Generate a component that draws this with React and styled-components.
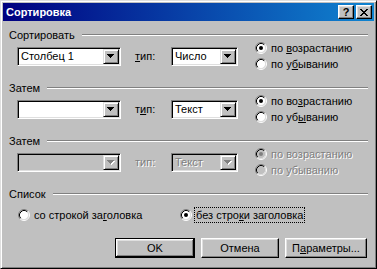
import React from "react";
import styled, { createGlobalStyle } from "styled-components";

const GlobalStyle = createGlobalStyle`
  body {
    margin: 0;
    background: #c0c0c0;
    font-family: "Liberation Sans", Arial, sans-serif;
  }
`;

const Window = styled.div`
  box-sizing: border-box;
  width: 377px;
  height: 269px;
  background: #c0c0c0;
  border: 1px solid;
  border-color: #dfdfdf #000 #000 #dfdfdf;
  box-shadow: inset 1px 1px #fff, inset -1px -1px #808080;
  padding: 2px;
  font-size: 11px;
  color: #000;
  display: flex;
  flex-direction: column;
`;

const TitleBar = styled.div`
  height: 18px;
  display: flex;
  align-items: center;
  justify-content: space-between;
  padding: 0 2px 0 3px;
  background: linear-gradient(to right, #000080, #1084d0);
`;

const Title = styled.span`
  color: #fff;
  font-weight: bold;
  font-size: 11px;
`;

const TitleButtons = styled.div`
  display: flex;
  gap: 2px;
`;

const TitleButton = styled.div`
  box-sizing: border-box;
  width: 16px;
  height: 14px;
  background: #c0c0c0;
  border: 1px solid;
  border-color: #fff #000 #000 #fff;
  box-shadow: inset -1px -1px #808080, inset 1px 1px #dfdfdf;
  display: flex;
  align-items: center;
  justify-content: center;
  font-weight: bold;
  font-size: 11px;
  line-height: 12px;
`;

const Body = styled.div`
  padding-top: 9px;
  display: flex;
  flex-direction: column;
`;

const Section = styled.div`
  margin-bottom: 11px;
`;

const Header = styled.div`
  height: 10px;
  display: flex;
  align-items: center;
  gap: 7px;
  padding: 0 6px;
  line-height: 10px;
`;

const Line = styled.div`
  flex: 1;
  height: 0;
  border-top: 1px solid #808080;
  border-bottom: 1px solid #fff;
`;

const Row = styled.div`
  height: 32px;
  display: flex;
  align-items: center;
  padding-left: 14px;
`;

const ComboBox = styled.div`
  box-sizing: border-box;
  width: ${({ $w }) => $w}px;
  height: 19px;
  padding: 1px;
  display: flex;
  border: 1px solid;
  border-color: #808080 #fff #fff #808080;
  box-shadow: inset 1px 1px #000, inset -1px -1px #dfdfdf;
  background: ${({ $disabled }) => ($disabled ? "#c0c0c0" : "#fff")};
`;

const ComboText = styled.span`
  flex: 1;
  padding-left: 2px;
  line-height: 15px;
  white-space: nowrap;
  color: ${({ $disabled }) => ($disabled ? "#808080" : "#000")};
  text-shadow: ${({ $disabled }) => ($disabled ? "1px 1px 0 #fff" : "none")};
`;

const DropButton = styled.div`
  box-sizing: border-box;
  width: 16px;
  height: 15px;
  background: #c0c0c0;
  border: 1px solid;
  border-color: #dfdfdf #000 #000 #dfdfdf;
  box-shadow: inset 1px 1px #fff, inset -1px -1px #808080;
  display: flex;
  align-items: center;
  justify-content: center;
`;

const TypeLabel = styled.span`
  width: 36px;
  margin-left: 14px;
  color: ${({ $disabled }) => ($disabled ? "#808080" : "#000")};
  text-shadow: ${({ $disabled }) => ($disabled ? "1px 1px 0 #fff" : "none")};
`;

const RadioGroup = styled.div`
  display: flex;
  flex-direction: column;
  margin-left: 17px;
`;

const RadioItem = styled.div`
  height: 16px;
  display: flex;
  align-items: center;
  gap: 3px;
  white-space: nowrap;
  color: ${({ $disabled }) => ($disabled ? "#808080" : "#000")};
  text-shadow: ${({ $disabled }) => ($disabled ? "1px 1px 0 #fff" : "none")};
`;

const RadioLabel = styled.span`
  padding: 0 1px;
  line-height: 14px;
  outline: ${({ $focus }) => ($focus ? "1px dotted #000" : "none")};
`;

const U = styled.span`
  text-decoration: underline;
`;

const ListRow = styled.div`
  height: 32px;
  display: grid;
  grid-template-columns: 162px auto;
  align-items: center;
  padding-left: 15px;
`;

const ButtonRow = styled.div`
  display: flex;
  justify-content: flex-end;
  gap: 6px;
  padding-right: 7px;
  margin-top: 7px;
`;

const PushButton = styled.div`
  box-sizing: border-box;
  width: ${({ $w }) => $w}px;
  height: 20px;
  display: flex;
  align-items: center;
  justify-content: center;
  border: 1px solid;
  border-color: ${({ $default }) =>
    $default ? "#000" : "#fff #000 #000 #fff"};
  box-shadow: ${({ $default }) =>
    $default
      ? "inset -1px -1px #000, inset 1px 1px #fff, inset -2px -2px #808080, inset 2px 2px #dfdfdf"
      : "inset -1px -1px #808080, inset 1px 1px #dfdfdf"};
`;

const Arrow = ({ disabled }) => (
  <svg width="8" height="5" viewBox="0 0 8 5" shapeRendering="crispEdges">
    {disabled && (
      <g fill="#fff" transform="translate(1 1)">
        <rect x="0" y="0" width="7" height="1" />
        <rect x="1" y="1" width="5" height="1" />
        <rect x="2" y="2" width="3" height="1" />
        <rect x="3" y="3" width="1" height="1" />
      </g>
    )}
    <g fill={disabled ? "#808080" : "#000"}>
      <rect x="0" y="0" width="7" height="1" />
      <rect x="1" y="1" width="5" height="1" />
      <rect x="2" y="2" width="3" height="1" />
      <rect x="3" y="3" width="1" height="1" />
    </g>
  </svg>
);

const RadioIcon = ({ checked, disabled }) => (
  <svg width="12" height="12" viewBox="0 0 12 12" style={{ flex: "none" }}>
    <circle cx="6" cy="6" r="4.5" fill={disabled ? "#c0c0c0" : "#fff"} />
    <path d="M9.89 2.11A5.5 5.5 0 0 0 2.11 9.89" stroke="#808080" fill="none" />
    <path d="M2.11 9.89A5.5 5.5 0 0 0 9.89 2.11" stroke="#fff" fill="none" />
    <path d="M9.18 2.82A4.5 4.5 0 0 0 2.82 9.18" stroke="#000" fill="none" />
    <path d="M2.82 9.18A4.5 4.5 0 0 0 9.18 2.82" stroke="#dfdfdf" fill="none" />
    {checked && <circle cx="6" cy="6" r="2" fill={disabled ? "#808080" : "#000"} />}
  </svg>
);

const Combo = ({ w, text, disabled }) => (
  <ComboBox $w={w} $disabled={disabled}>
    <ComboText $disabled={disabled}>{text}</ComboText>
    <DropButton>
      <Arrow disabled={disabled} />
    </DropButton>
  </ComboBox>
);

const Radio = ({ checked, disabled, focus, children }) => (
  <RadioItem $disabled={disabled}>
    <RadioIcon checked={checked} disabled={disabled} />
    <RadioLabel $focus={focus}>{children}</RadioLabel>
  </RadioItem>
);

const sections = [
  {
    title: "Сортировать",
    column: "Столбец 1",
    type: "Число",
    typeLabel: (
      <>
        <U>т</U>ип:
      </>
    ),
    asc: (
      <>
        по <U>в</U>озрастанию
      </>
    ),
    desc: (
      <>
        по у<U>б</U>ыванию
      </>
    ),
  },
  {
    title: "Затем",
    column: "",
    type: "Текст",
    typeLabel: (
      <>
        т<U>и</U>п:
      </>
    ),
    asc: (
      <>
        по во<U>з</U>растанию
      </>
    ),
    desc: (
      <>
        по уб<U>ы</U>ванию
      </>
    ),
  },
  {
    title: "Затем",
    column: "",
    type: "Текст",
    disabled: true,
    typeLabel: "тип:",
    asc: "по возрастанию",
    desc: "по убыванию",
  },
];

export default function App() {
  return (
    <>
      <GlobalStyle />
      <Window>
        <TitleBar>
          <Title>Сортировка</Title>
          <TitleButtons>
            <TitleButton>?</TitleButton>
            <TitleButton>
              <svg width="8" height="7" viewBox="0 0 8 7" shapeRendering="crispEdges">
                <path
                  d="M0 0h2v1h1v1h2V1h1V0h2v1H7v1H6v1H5v1h1v1h1v1h1v1H6V6H5V5H3v1H2v1H0V6h1V5h1V4h1V3H2V2H1V1H0z"
                  fill="#000"
                />
              </svg>
            </TitleButton>
          </TitleButtons>
        </TitleBar>
        <Body>
          {sections.map((s, i) => (
            <Section key={i}>
              <Header>
                <span>{s.title}</span>
                <Line />
              </Header>
              <Row>
                <Combo w={104} text={s.column} disabled={s.disabled} />
                <TypeLabel $disabled={s.disabled}>{s.typeLabel}</TypeLabel>
                <Combo w={67} text={s.type} disabled={s.disabled} />
                <RadioGroup>
                  <Radio checked disabled={s.disabled}>
                    {s.asc}
                  </Radio>
                  <Radio disabled={s.disabled}>{s.desc}</Radio>
                </RadioGroup>
              </Row>
            </Section>
          ))}
          <Header>
            <span>Список</span>
            <Line />
          </Header>
          <ListRow>
            <Radio>
              со строкой за<U>г</U>оловка
            </Radio>
            <Radio checked focus>
              без стро<U>к</U>и заголовка
            </Radio>
          </ListRow>
          <ButtonRow>
            <PushButton $w={80} $default>
              OK
            </PushButton>
            <PushButton $w={78}>Отмена</PushButton>
            <PushButton $w={82}>
              <span>
                П<U>а</U>раметры...
              </span>
            </PushButton>
          </ButtonRow>
        </Body>
      </Window>
    </>
  );
}
